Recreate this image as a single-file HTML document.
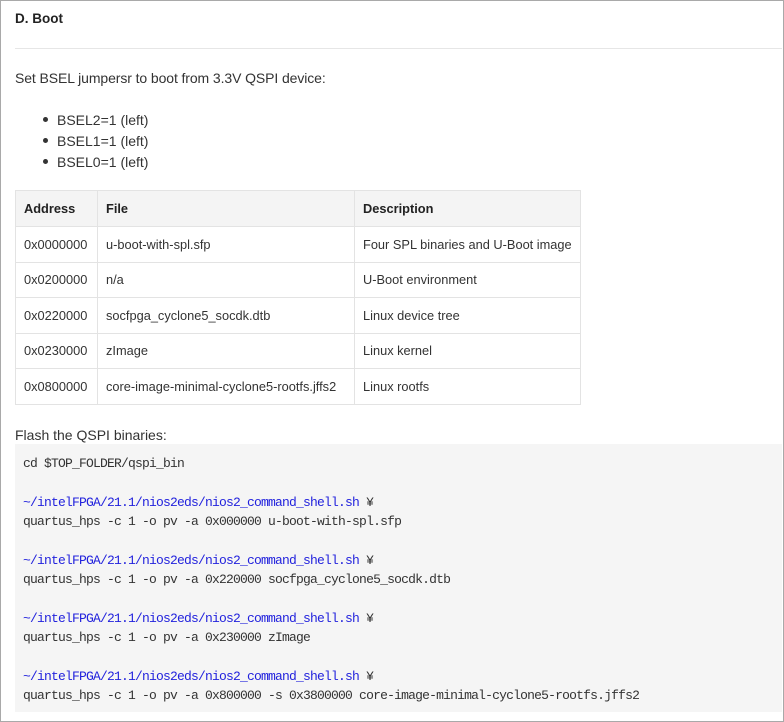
<!DOCTYPE html>
<html><head><meta charset="utf-8"><style>
*{margin:0;padding:0;box-sizing:border-box}
html,body{width:784px;height:722px;overflow:hidden;background:#fff}
body{font-family:"Liberation Sans",Arial,sans-serif;color:#333;position:relative}
.frame{position:absolute;left:0;top:0;width:784px;height:722px;border:1px solid #a9a9a9}
h1{position:absolute;left:15px;top:11px;font-size:13.5px;font-weight:bold;color:#222}
.sep{position:absolute;left:15px;right:2px;top:48px;border-top:1px solid #e6e6e6}
.p1{position:absolute;left:15px;top:70px;font-size:14px;color:#333;letter-spacing:-0.1px}
ul{position:absolute;left:43px;top:110px;font-size:14px;line-height:21px;list-style:none}
ul li:before{content:"";display:inline-block;width:5px;height:5px;border-radius:50%;background:#333;margin-right:9px;vertical-align:middle;position:relative;top:-2px}
table{position:absolute;left:15px;top:190px;border-collapse:collapse;font-size:12.8px;color:#333}
td,th{border:1px solid #e3e3e3;padding:0 8px;text-align:left;height:35.5px;white-space:nowrap}
th{background:#f4f4f4;font-weight:bold;color:#222;height:36px}
.p2{position:absolute;left:15px;top:427px;font-size:14px;color:#333}
pre{position:absolute;left:15px;top:444px;width:767px;height:268px;background:#f5f5f5;padding:10px 8px;font-family:"Liberation Mono",monospace;font-size:13px;letter-spacing:-0.8px;line-height:19.35px;color:#333}
.b{color:#2222dd}
</style></head><body>
<div class="frame"></div>
<h1>D. Boot</h1>
<div class="sep"></div>
<div class="p1">Set BSEL jumpersr to boot from 3.3V QSPI device:</div>
<ul><li>BSEL2=1 (left)</li><li>BSEL1=1 (left)</li><li>BSEL0=1 (left)</li></ul>
<table>
<tr><th style="width:82px">Address</th><th style="width:257px">File</th><th style="width:226px">Description</th></tr>
<tr><td>0x0000000</td><td>u-boot-with-spl.sfp</td><td>Four SPL binaries and U-Boot image</td></tr>
<tr><td>0x0200000</td><td>n/a</td><td>U-Boot environment</td></tr>
<tr><td>0x0220000</td><td>socfpga_cyclone5_socdk.dtb</td><td>Linux device tree</td></tr>
<tr><td>0x0230000</td><td>zImage</td><td>Linux kernel</td></tr>
<tr><td>0x0800000</td><td>core-image-minimal-cyclone5-rootfs.jffs2</td><td>Linux rootfs</td></tr>
</table>
<div class="p2">Flash the QSPI binaries:</div>
<pre>cd $TOP_FOLDER/qspi_bin

<span class="b">~/intelFPGA/21.1/nios2eds/nios2_command_shell.sh</span> ¥
quartus_hps -c 1 -o pv -a 0x000000 u-boot-with-spl.sfp

<span class="b">~/intelFPGA/21.1/nios2eds/nios2_command_shell.sh</span> ¥
quartus_hps -c 1 -o pv -a 0x220000 socfpga_cyclone5_socdk.dtb

<span class="b">~/intelFPGA/21.1/nios2eds/nios2_command_shell.sh</span> ¥
quartus_hps -c 1 -o pv -a 0x230000 zImage

<span class="b">~/intelFPGA/21.1/nios2eds/nios2_command_shell.sh</span> ¥
quartus_hps -c 1 -o pv -a 0x800000 -s 0x3800000 core-image-minimal-cyclone5-rootfs.jffs2</pre>
</body></html>
